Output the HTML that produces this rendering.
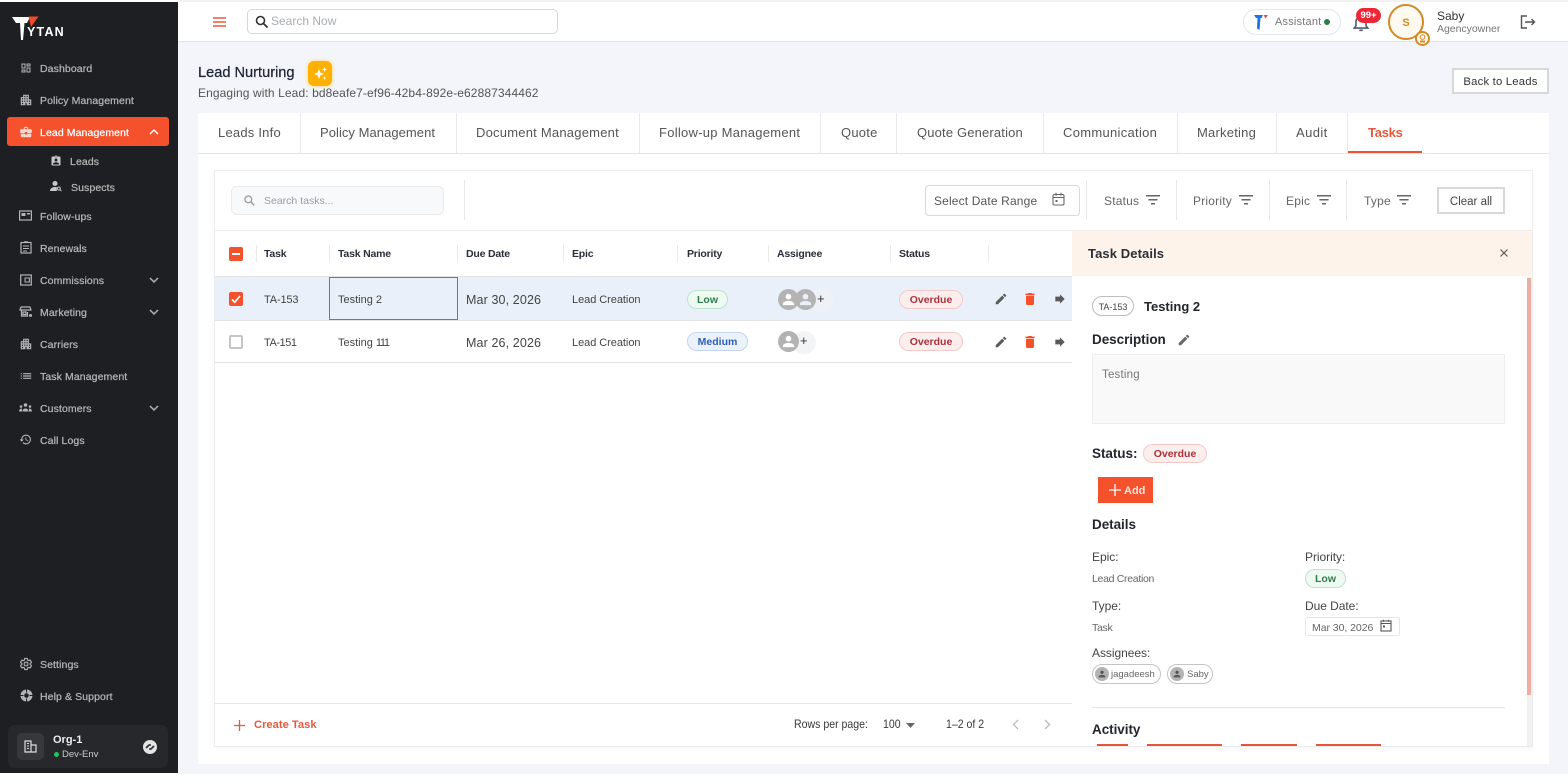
<!DOCTYPE html>
<html><head><meta charset="utf-8"><title>Tasks</title>
<style>
html,body{margin:0;padding:0;width:1568px;height:784px;overflow:hidden;background:#fff}
body{font-family:"Liberation Sans",sans-serif;position:relative;color:#333}
.b{position:absolute;box-sizing:border-box}
.t{position:absolute;white-space:nowrap;line-height:16px;transform:translateY(calc(-50% + 1px))}
.c{transform:translateY(calc(-50% + 1px)) scaleX(.88);transform-origin:left center}
.i{position:absolute;overflow:visible}
.s{font-size:10.5px;color:#b4b4b4;letter-spacing:.1px;font-weight:400;-webkit-text-stroke:.25px #b4b4b4}
.tab{font-size:13px;color:#555;letter-spacing:.22px}
.th{font-size:10.5px;font-weight:700;color:#2b2f38;letter-spacing:-.2px}
.td{font-size:11px;color:#444;letter-spacing:0}
.d{font-size:12.5px;letter-spacing:.12px}
.e{letter-spacing:-.05px}
.f{font-size:12px;color:#666;letter-spacing:.2px}
.pill{position:absolute;box-sizing:border-box;border-radius:10px;font-size:10.5px;font-weight:700;text-align:center;line-height:19px;height:19px;letter-spacing:0}
.low{background:#edf9f1;border:1px solid #bfe3cd;color:#2f7d50}
.med{background:#ebf2fc;border:1px solid #c4d6ef;color:#2f5fb5}
.over{background:#fdeeee;border:1px solid #f3c9c9;color:#a8323a}
.sep{position:absolute;width:1px;background:#e9e9e9}
.h{font-size:13.5px;font-weight:700;color:#23262e;letter-spacing:-.05px}
.l{font-size:12px;color:#444;letter-spacing:-.05px}
.sm{font-size:10.5px;color:#666;letter-spacing:-.3px}
</style></head>
<body>
<svg width="0" height="0" style="position:absolute"><defs>
<symbol id="edit" viewBox="0 0 24 24"><path d="M3 17.25V21h3.75L17.81 9.94l-3.75-3.75L3 17.25zM20.71 7.04c.39-.39.39-1.02 0-1.41l-2.34-2.34c-.39-.39-1.02-.39-1.41 0l-1.83 1.83 3.75 3.75 1.83-1.83z"/></symbol>
<symbol id="del" viewBox="0 0 24 24"><path d="M6 19c0 1.1.9 2 2 2h8c1.1 0 2-.9 2-2V7H6v12zM19 4h-3.5l-1-1h-5l-1 1H5v2h14V4z"/></symbol>
<symbol id="arr" viewBox="0 0 24 24"><path d="M12 8V4l8 8-8 8v-4H4V8z"/></symbol>
<symbol id="per" viewBox="0 0 24 24"><path d="M12 12c2.21 0 4-1.79 4-4s-1.79-4-4-4-4 1.79-4 4 1.79 4 4 4zm0 2c-2.67 0-8 1.34-8 4v2h16v-2c0-2.66-5.33-4-8-4z"/></symbol>
<symbol id="apt" viewBox="0 0 24 24"><path d="M17 11V3H7v4H3v14h8v-4h2v4h8V11h-4zM7 19H5v-2h2v2zm0-4H5v-2h2v2zm0-4H5V9h2v2zm4 4H9v-2h2v2zm0-4H9V9h2v2zm0-4H9V5h2v2zm4 8h-2v-2h2v2zm0-4h-2V9h2v2zm0-4h-2V5h2v2zm4 12h-2v-2h2v2zm0-4h-2v-2h2v2z"/></symbol>
<symbol id="flt" viewBox="0 0 14 10"><path d="M0 .75h14M2.5 4.75h9M5 8.75h4" fill="none" stroke="#666" stroke-width="1.4"/></symbol>
</defs></svg>

<!-- main background -->
<div class="b" style="left:178px;top:41px;width:1390px;height:733px;background:#f4f5fa"></div>

<!-- sidebar -->
<div class="b" style="left:0;top:2px;width:178px;height:771px;background:#1d1f22"></div>
<svg class="i" style="left:10px;top:14px" width="60" height="28" viewBox="0 0 60 28">
<path d="M2 3H20L17 9H14.500L13 26H11L10 9H6Z" fill="#fff"/>
<path d="M18.500 2.500H28.500L21 13Z" fill="#f0492c"/>
</svg>
<div class="t" style="left:27px;top:31px;font-size:12.5px;font-weight:700;color:#fff;letter-spacing:1.2px">YTAN</div>

<svg class="i" style="left:20px;top:62px" width="12" height="12" viewBox="0 0 24 24" fill="#b4b4b4"><path d="M19 5v2h-4V5h4M9 5v6H5V5h4m10 8v6h-4v-6h4M9 17v2H5v-2h4M21 3h-8v6h8V3zM11 3H3v10h8V3zm10 8h-8v10h8V11zm-10 4H3v6h8v-6z"/></svg>
<div class="t s" style="left:40px;top:68px">Dashboard</div>
<svg class="i" style="left:19px;top:93px" width="14" height="14" fill="#b4b4b4"><use href="#apt"/></svg>
<div class="t s" style="left:40px;top:100px">Policy Management</div>

<div class="b" style="left:7px;top:117px;width:162px;height:29px;background:#f4512c;border-radius:3px"></div>
<svg class="i" style="left:19px;top:125px" width="14" height="14" viewBox="0 0 24 24" fill="#f8d9cf"><path d="M10 16v-1H3.010L3 19c0 1.110.89 2 2 2h14c1.110 0 2-.89 2-2v-4h-7v1h-4zm10-9h-4.010V5l-2-2h-4l-2 2v2H4c-1.100 0-2 .9-2 2v3c0 1.110.89 2 2 2h6v-2h4v2h6c1.100 0 2-.9 2-2V9c0-1.100-.9-2-2-2zm-6 0h-4V5h4v2z"/></svg>
<div class="t s" style="left:40px;top:132px;color:#fff;-webkit-text-stroke:.25px #fff">Lead Management</div>
<svg class="i" style="left:149px;top:129px" width="10" height="6" viewBox="0 0 10 6"><path d="M1 5l4-4 4 4" fill="none" stroke="#fff" stroke-width="1.500"/></svg>

<svg class="i" style="left:50px;top:155px" width="12" height="12" viewBox="0 0 24 24" fill="#c8c8c8"><path d="M19 3h-4.180C14.400 1.840 13.300 1 12 1c-1.300 0-2.400.84-2.820 2H5c-1.100 0-2 .9-2 2v14c0 1.100.9 2 2 2h14c1.100 0 2-.9 2-2V5c0-1.100-.9-2-2-2zm-7 0c.55 0 1 .45 1 1s-.45 1-1 1-1-.45-1-1 .45-1 1-1zm0 4c1.660 0 3 1.340 3 3s-1.340 3-3 3-3-1.340-3-3 1.340-3 3-3zm6 12H6v-1.400c0-2 4-3.100 6-3.100s6 1.100 6 3.100V19z"/></svg>
<div class="t s" style="left:70px;top:161px">Leads</div>
<svg class="i" style="left:50px;top:180px" width="12" height="12" viewBox="0 0 12 12" fill="#c8c8c8"><circle cx="5" cy="3.500" r="2.500"/><path d="M0 11c0-3 3-4 5-4 .6 0 1.200.1 1.800.2V11z"/><circle cx="8.800" cy="8.500" r="1.500" fill="none" stroke="#c8c8c8"/><path d="M10 9.700l1.500 1.500" stroke="#c8c8c8"/></svg>
<div class="t s" style="left:71px;top:187px">Suspects</div>

<svg class="i" style="left:19px;top:210px" width="13" height="12" viewBox="0 0 13 12"><rect x=".6" y="1" width="11.800" height="9" fill="none" stroke="#b4b4b4" stroke-width="1.200"/><rect x="2.500" y="3" width="4" height="3" fill="#b4b4b4"/><rect x="8" y="3" width="3" height="1.500" fill="#b4b4b4"/></svg>
<div class="t s" style="left:40px;top:216px">Follow-ups</div>
<svg class="i" style="left:20px;top:241px" width="12" height="13" viewBox="0 0 12 13"><rect x="1" y="1.500" width="10" height="10.500" fill="none" stroke="#b4b4b4" stroke-width="1.200"/><path d="M3 5h6M3 7.500h6M3 10h4M4 .8h4" stroke="#b4b4b4" stroke-width="1.100"/></svg>
<div class="t s" style="left:40px;top:248px">Renewals</div>
<svg class="i" style="left:20px;top:274px" width="12" height="12" viewBox="0 0 12 12"><rect x=".7" y="1" width="10.600" height="10" fill="none" stroke="#b4b4b4" stroke-width="1.200"/><rect x="5" y="4" width="4.500" height="4" fill="none" stroke="#b4b4b4"/></svg>
<div class="t s" style="left:40px;top:280px">Commissions</div>
<svg class="i" style="left:149px;top:277px" width="10" height="6" viewBox="0 0 10 6"><path d="M1 1l4 4 4-4" fill="none" stroke="#b4b4b4" stroke-width="1.500"/></svg>
<svg class="i" style="left:20px;top:306px" width="13" height="12" viewBox="0 0 13 12"><path d="M1 1h9l1 3H0zM1.500 4v6h6V6M3 6h3v2.500H3z" fill="none" stroke="#b4b4b4" stroke-width="1.200"/><circle cx="10.500" cy="9.500" r="1.500" fill="#b4b4b4"/></svg>
<div class="t s" style="left:40px;top:312px">Marketing</div>
<svg class="i" style="left:149px;top:309px" width="10" height="6" viewBox="0 0 10 6"><path d="M1 1l4 4 4-4" fill="none" stroke="#b4b4b4" stroke-width="1.500"/></svg>
<svg class="i" style="left:19px;top:337px" width="14" height="14" fill="#b4b4b4"><use href="#apt"/></svg>
<div class="t s" style="left:40px;top:344px">Carriers</div>
<svg class="i" style="left:19px;top:369px" width="14" height="14" viewBox="0 0 24 24" fill="#b4b4b4"><path d="M3 13h2v-2H3v2zm0 4h2v-2H3v2zm0-8h2V7H3v2zm4 4h14v-2H7v2zm0 4h14v-2H7v2zM7 7v2h14V7H7z"/></svg>
<div class="t s" style="left:40px;top:376px">Task Management</div>
<svg class="i" style="left:19px;top:403px" width="13" height="9" viewBox="0 0 13 9" fill="#b4b4b4"><circle cx="6.500" cy="2" r="1.800"/><circle cx="2" cy="3.500" r="1.300"/><circle cx="11" cy="3.500" r="1.300"/><path d="M3.500 8.500c0-4 6-4 6 0zM0 8.500c0-2.500 2-3 3-3v3zM13 8.500c0-2.500-2-3-3-3v3z"/></svg>
<div class="t s" style="left:40px;top:408px">Customers</div>
<svg class="i" style="left:149px;top:405px" width="10" height="6" viewBox="0 0 10 6"><path d="M1 1l4 4 4-4" fill="none" stroke="#b4b4b4" stroke-width="1.500"/></svg>
<svg class="i" style="left:19px;top:433px" width="13" height="13" viewBox="0 0 24 24" fill="#b4b4b4"><path d="M13 3c-4.970 0-9 4.030-9 9H1l3.890 3.890.07.14L9 12H6c0-3.870 3.130-7 7-7s7 3.130 7 7-3.130 7-7 7c-1.930 0-3.680-.79-4.940-2.060l-1.420 1.420C8.270 19.990 10.510 21 13 21c4.970 0 9-4.030 9-9s-4.030-9-9-9zm-1 5v5l4.280 2.540.72-1.210-3.500-2.080V8H12z"/></svg>
<div class="t s" style="left:40px;top:440px">Call Logs</div>

<svg class="i" style="left:19px;top:657px" width="14" height="14" viewBox="0 0 24 24" fill="none" stroke="#b4b4b4" stroke-width="2"><path d="M19.140 12.940c.04-.3.06-.61.06-.94 0-.32-.02-.64-.07-.94l2.030-1.580c.18-.14.23-.41.12-.61l-1.920-3.320c-.12-.22-.37-.29-.59-.22l-2.390.96c-.5-.38-1.030-.7-1.620-.94l-.36-2.540c-.04-.24-.24-.41-.48-.41h-3.840c-.24 0-.43.17-.47.41l-.36 2.540c-.59.24-1.130.57-1.620.94l-2.390-.96c-.22-.08-.47 0-.59.22L2.740 8.870c-.12.21-.08.47.12.61l2.030 1.580c-.05.3-.09.63-.09.94s.02.64.07.94l-2.030 1.580c-.18.14-.23.41-.12.61l1.920 3.320c.12.22.37.29.59.22l2.390-.96c.5.38 1.030.7 1.620.94l.36 2.540c.05.24.24.41.48.41h3.840c.24 0 .44-.17.47-.41l.36-2.540c.59-.24 1.130-.56 1.620-.94l2.390.96c.22.08.47 0 .59-.22l1.920-3.320c.12-.22.07-.47-.12-.61l-2.010-1.580z"/><circle cx="12" cy="12" r="3.200"/></svg>
<div class="t s" style="left:40px;top:664px">Settings</div>
<svg class="i" style="left:20px;top:689px" width="13" height="13" viewBox="0 0 13 13"><circle cx="6.500" cy="6.500" r="6" fill="#b4b4b4"/><circle cx="6.500" cy="6.500" r="2.300" fill="#1d1f22"/><path d="M6.500 .5v3M6.500 9.500v3M.5 6.500h3M9.500 6.500h3" stroke="#1d1f22" stroke-width="1"/></svg>
<div class="t s" style="left:40px;top:696px">Help &amp; Support</div>

<div class="b" style="left:8px;top:725px;width:160px;height:43px;background:#26282b;border-radius:7px"></div>
<div class="b" style="left:17px;top:733px;width:27px;height:27px;background:#36383b;border-radius:5px"></div>
<svg class="i" style="left:24px;top:740px" width="13" height="13" viewBox="0 0 13 13"><path d="M1 1h6v11H1zM7 5h5v7H7z" fill="none" stroke="#ddd" stroke-width="1.200"/><path d="M3 3.500h2M3 6h2M3 8.500h2" stroke="#ddd"/></svg>
<div class="t" style="left:53px;top:739px;font-size:11px;font-weight:700;color:#eee">Org-1</div>
<div class="b" style="left:54px;top:752px;width:5px;height:5px;border-radius:50%;background:#22c55e"></div>
<div class="t" style="left:62px;top:754px;font-size:9.500px;color:#ccc">Dev-Env</div>
<div class="b" style="left:143px;top:740px;width:14px;height:14px;border-radius:50%;background:#e4e4e4"></div>
<svg class="i" style="left:145px;top:743px" width="10" height="8" viewBox="0 0 10 8"><path d="M1 5l3-3h2M9 3L6 6H4" fill="none" stroke="#2a2a2a" stroke-width="1.600"/></svg>

<!-- top bar -->
<div class="b" style="left:178px;top:2px;width:1390px;height:40px;background:#fff;border-bottom:1px solid #e3e3e3"></div>
<div class="b" style="left:178px;top:0;width:1390px;height:2px;background:#f2f2f2"></div>
<svg class="i" style="left:213px;top:17px" width="13" height="10" viewBox="0 0 13 10"><path d="M0 1h13M0 5h13M0 9h13" stroke="#e8593f" stroke-width="1.500"/></svg>
<div class="b" style="left:247px;top:9px;width:311px;height:25px;border:1px solid #d4d7da;border-radius:5px"></div>
<svg class="i" style="left:255px;top:15px" width="14" height="14" viewBox="0 0 14 14"><circle cx="5.500" cy="5.500" r="4" fill="none" stroke="#333" stroke-width="1.600"/><path d="M8.500 8.500l4 4" stroke="#333" stroke-width="1.800"/></svg>
<div class="t" style="left:271px;top:20px;font-size:12px;color:#a9adb2">Search Now</div>

<div class="b" style="left:1243px;top:9px;width:98px;height:26px;border:1px solid #e4e7ec;border-radius:13px"></div>
<svg class="i" style="left:1253px;top:13px" width="16" height="18" viewBox="0 0 16 18"><path d="M1 2h9l-1.500 3H7.500L6.500 17 4 15.500 4.500 5H3z" fill="#1a73e8"/><path d="M10.500 2H15l-2.500 3.500z" fill="#e8503a"/></svg>
<div class="t" style="left:1275px;top:21px;font-size:11px;color:#777;letter-spacing:.2px">Assistant</div>
<div class="b" style="left:1324px;top:19px;width:6px;height:6px;border-radius:50%;background:#2f7d45"></div>
<svg class="i" style="left:1352px;top:14px" width="18" height="18" viewBox="0 0 16 16"><path d="M2 12.500h12l-1.500-2V7c0-2.500-1.800-4.500-4.500-4.500S3.500 4.500 3.500 7v3.500zM6.500 14.500h3" fill="none" stroke="#50586a" stroke-width="1.400"/></svg>
<div class="b" style="left:1356px;top:8px;width:25px;height:15px;border-radius:8px;background:#ee2737;color:#fff;font-size:9.500px;font-weight:700;text-align:center;line-height:15px">99+</div>
<div class="b" style="left:1388px;top:4px;width:36px;height:36px;border-radius:50%;border:2px solid #d28a27;background:#fffaf0;color:#d98a1a;font-size:11px;font-weight:700;text-align:center;line-height:34px">S</div>
<div class="b" style="left:1415px;top:31px;width:15px;height:15px;border-radius:50%;border:2px solid #d28a27;background:#fff8ee"></div>
<svg class="i" style="left:1419px;top:34px" width="7" height="9" viewBox="0 0 7 9"><circle cx="3.500" cy="3" r="2.300" fill="none" stroke="#d28a27"/><path d="M1 6.500h5v2H1z" fill="#d28a27"/></svg>
<div class="t" style="left:1437px;top:15px;font-size:12px;color:#333">Saby</div>
<div class="t" style="left:1437px;top:28px;font-size:10.5px;color:#777;letter-spacing:-.03px">Agencyowner</div>
<svg class="i" style="left:1520px;top:15px" width="16" height="14" viewBox="0 0 16 14"><path d="M7 1H1.500v12H7M5 7h9.500M11.500 4l3 3-3 3" fill="none" stroke="#555" stroke-width="1.400"/></svg>

<!-- page heading -->
<div class="t" style="left:198px;top:72px;font-size:14.6px;color:#1d2433;-webkit-text-stroke:.25px #1d2433">Lead Nurturing</div>
<div class="b" style="left:308px;top:61px;width:24px;height:25px;border-radius:6px;background:#ffb000;box-shadow:0 0 4px #ffd76a"></div>
<svg class="i" style="left:313px;top:66px" width="15" height="15" viewBox="0 0 15 15" fill="#fff"><path d="M6 3l1.400 3.600L11 8 7.400 9.400 6 13 4.600 9.400 1 8l3.600-1.400zM11.500 1l.7 1.800L14 3.500l-1.800.7-.7 1.800-.7-1.800L9 3.500l1.800-.7zM11.500 10l.5 1.500 1.500.5-1.500.5-.5 1.500-.5-1.500-1.500-.5 1.500-.5z"/></svg>
<div class="t" style="left:198px;top:92px;font-size:12px;color:#555;letter-spacing:.1px">Engaging with Lead: bd8eafe7-ef96-42b4-892e-e62887344462</div>
<div class="b" style="left:1452px;top:68px;width:97px;height:26px;background:#fff;border:2px solid #d6d8db;font-size:11.3px;color:#333;text-align:center;line-height:25px;letter-spacing:.2px">Back to Leads</div>

<!-- content card -->
<div class="b" style="left:198px;top:113px;width:1351px;height:651px;background:#fff"></div>
<div class="b" style="left:198px;top:153px;width:1351px;height:1px;background:#e5e5e5"></div>
<div class="sep" style="left:300px;top:113px;height:40px"></div>
<div class="sep" style="left:456px;top:113px;height:40px"></div>
<div class="sep" style="left:639px;top:113px;height:40px"></div>
<div class="sep" style="left:820px;top:113px;height:40px"></div>
<div class="sep" style="left:896px;top:113px;height:40px"></div>
<div class="sep" style="left:1043px;top:113px;height:40px"></div>
<div class="sep" style="left:1177px;top:113px;height:40px"></div>
<div class="sep" style="left:1276px;top:113px;height:40px"></div>
<div class="sep" style="left:1347px;top:113px;height:40px"></div>
<div class="t tab" style="left:218px;top:132px">Leads Info</div>
<div class="t tab" style="left:320px;top:132px;letter-spacing:.05px">Policy Management</div>
<div class="t tab" style="left:476px;top:132px">Document Management</div>
<div class="t tab" style="left:659px;top:132px;letter-spacing:.27px">Follow-up Management</div>
<div class="t tab" style="left:841px;top:132px">Quote</div>
<div class="t tab" style="left:917px;top:132px;letter-spacing:.16px">Quote Generation</div>
<div class="t tab" style="left:1063px;top:132px;letter-spacing:.3px">Communication</div>
<div class="t tab" style="left:1197px;top:132px">Marketing</div>
<div class="t tab" style="left:1296px;top:132px;letter-spacing:.4px">Audit</div>
<div class="t tab" style="left:1368px;top:132px;color:#e8583c;font-weight:700;letter-spacing:-.25px">Tasks</div>
<div class="b" style="left:1348px;top:151px;width:74px;height:2px;background:#ee5330"></div>

<!-- inner card -->
<div class="b" style="left:214px;top:170px;width:1319px;height:577px;border:1px solid #ececec;box-shadow:0 2px 4px rgba(0,0,0,.04);background:#fff"></div>
<div class="b" style="left:215px;top:230px;width:1317px;height:1px;background:#ececec"></div>
<div class="b" style="left:231px;top:186px;width:213px;height:29px;background:#f8f9fa;border:1px solid #e9eaec;border-radius:6px"></div>
<svg class="i" style="left:244px;top:195px" width="11" height="11" viewBox="0 0 14 14"><circle cx="5.500" cy="5.500" r="4.300" fill="none" stroke="#999" stroke-width="1.600"/><path d="M8.500 8.500l4.500 4.500" stroke="#999" stroke-width="1.800"/></svg>
<div class="t" style="left:264px;top:200px;font-size:10.5px;color:#9a9ea4;letter-spacing:0">Search tasks...</div>
<div class="sep" style="left:464px;top:180px;height:40px"></div>
<div class="b" style="left:925px;top:185px;width:155px;height:31px;border:1px solid #d9d9d9;border-radius:4px"></div>
<div class="t f" style="left:934px;top:200px;color:#555;letter-spacing:.15px">Select Date Range</div>
<svg class="i" style="left:1052px;top:192px" width="13" height="14" viewBox="0 0 13 14"><rect x="1" y="2.500" width="11" height="10.500" rx="1.500" fill="none" stroke="#666" stroke-width="1.100"/><path d="M1 5.500h11M4 .8v3M9 .8v3" stroke="#666" stroke-width="1.100"/><rect x="3.500" y="8" width="2" height="2" fill="#666"/></svg>
<div class="sep" style="left:1086px;top:180px;height:40px"></div>
<div class="sep" style="left:1176px;top:180px;height:40px"></div>
<div class="sep" style="left:1269px;top:180px;height:40px"></div>
<div class="sep" style="left:1346px;top:180px;height:40px"></div>
<div class="t f" style="left:1104px;top:200px">Status</div>
<svg class="i" style="left:1146px;top:195px" width="14" height="10"><use href="#flt"/></svg>
<div class="t f" style="left:1193px;top:200px">Priority</div>
<svg class="i" style="left:1239px;top:195px" width="14" height="10"><use href="#flt"/></svg>
<div class="t f" style="left:1286px;top:200px">Epic</div>
<svg class="i" style="left:1317px;top:195px" width="14" height="10"><use href="#flt"/></svg>
<div class="t f" style="left:1364px;top:200px">Type</div>
<svg class="i" style="left:1397px;top:195px" width="14" height="10"><use href="#flt"/></svg>
<div class="b" style="left:1437px;top:187px;width:68px;height:27px;border:2px solid #d6d8db;font-size:11.5px;color:#444;text-align:center;line-height:26px">Clear all</div>

<!-- table -->
<div class="b" style="left:215px;top:276px;width:857px;height:1px;background:#e4e4e4"></div>
<div class="b" style="left:215px;top:277px;width:857px;height:43px;background:#e9f0fa"></div>
<div class="b" style="left:215px;top:320px;width:857px;height:1px;background:#e4e4e4"></div>
<div class="b" style="left:215px;top:362px;width:857px;height:1px;background:#e4e4e4"></div>
<div class="b" style="left:215px;top:703px;width:857px;height:1px;background:#e8e8e8"></div>

<div class="sep" style="left:256px;top:245px;height:17px"></div>
<div class="sep" style="left:329px;top:245px;height:17px"></div>
<div class="sep" style="left:457px;top:245px;height:17px"></div>
<div class="sep" style="left:563px;top:245px;height:17px"></div>
<div class="sep" style="left:677px;top:245px;height:17px"></div>
<div class="sep" style="left:768px;top:245px;height:17px"></div>
<div class="sep" style="left:890px;top:245px;height:17px"></div>
<div class="sep" style="left:988px;top:245px;height:17px"></div>

<div class="b" style="left:229px;top:247px;width:14px;height:14px;background:#f4512c;border-radius:2px"></div>
<div class="b" style="left:232px;top:253px;width:8px;height:2px;background:#fff"></div>
<div class="t th" style="left:264px;top:253px">Task</div>
<div class="t th" style="left:338px;top:253px">Task Name</div>
<div class="t th" style="left:466px;top:253px">Due Date</div>
<div class="t th" style="left:572px;top:253px">Epic</div>
<div class="t th" style="left:687px;top:253px">Priority</div>
<div class="t th" style="left:777px;top:253px">Assignee</div>
<div class="t th" style="left:899px;top:253px">Status</div>

<!-- row 1 -->
<div class="b" style="left:229px;top:292px;width:14px;height:14px;background:#f4512c;border-radius:2px"></div>
<svg class="i" style="left:229px;top:292px" width="14" height="14" viewBox="0 0 14 14"><path d="M3 7.500l2.800 2.700L11 4" fill="none" stroke="#fff" stroke-width="1.600"/></svg>
<div class="t td" style="left:264px;top:299px;letter-spacing:-.15px">TA-153</div>
<div class="b" style="left:329px;top:277px;width:129px;height:43px;border:1px solid #4a86b5"></div>
<div class="t td" style="left:338px;top:299px">Testing 2</div>
<div class="t td d" style="left:466px;top:299px">Mar 30, 2026</div>
<div class="t td e" style="left:572px;top:299px">Lead Creation</div>
<div class="pill low" style="left:687px;top:290px;width:41px">Low</div>
<div class="b" style="left:809px;top:288px;width:24px;height:24px;border-radius:50%;background:#eef2f8"></div>
<div class="b" style="left:778px;top:289px;width:21px;height:21px;border-radius:50%;background:#b3b3b3"></div>
<svg class="i" style="left:780px;top:291px" width="17" height="17" fill="#fff"><use href="#per"/></svg>
<div class="b" style="left:795px;top:289px;width:21px;height:21px;border-radius:50%;background:#b3b3b3"></div>
<svg class="i" style="left:797px;top:291px" width="17" height="17" fill="#e9f0fa"><use href="#per"/></svg>
<div class="t" style="left:817px;top:298px;font-size:13px;color:#333">+</div>
<div class="pill over" style="left:899px;top:290px;width:64px">Overdue</div>
<svg class="i" style="left:994px;top:292px" width="14" height="14" fill="#5a5a5a"><use href="#edit"/></svg>
<svg class="i" style="left:1022px;top:291px" width="16" height="16" fill="#f4512c"><use href="#del"/></svg>
<svg class="i" style="left:1053px;top:292px" width="14" height="14" fill="#5a5a5a"><use href="#arr"/></svg>

<!-- row 2 -->
<div class="b" style="left:229px;top:335px;width:14px;height:14px;border:2px solid #c4c4c4;border-radius:2px"></div>
<div class="t td" style="left:264px;top:342px;letter-spacing:-.45px">TA-151</div>
<div class="t td" style="left:338px;top:342px">Testing <span style="letter-spacing:-1.3px">111</span></div>
<div class="t td d" style="left:466px;top:342px">Mar 26, 2026</div>
<div class="t td e" style="left:572px;top:342px">Lead Creation</div>
<div class="pill med" style="left:687px;top:332px;width:61px">Medium</div>
<div class="b" style="left:792px;top:331px;width:24px;height:23px;border-radius:50%;background:#f3f4f6"></div>
<div class="b" style="left:778px;top:331px;width:21px;height:21px;border-radius:50%;background:#b3b3b3"></div>
<svg class="i" style="left:780px;top:333px" width="17" height="17" fill="#fff"><use href="#per"/></svg>
<div class="t" style="left:800px;top:340px;font-size:13px;color:#333">+</div>
<div class="pill over" style="left:899px;top:332px;width:64px">Overdue</div>
<svg class="i" style="left:994px;top:335px" width="14" height="14" fill="#5a5a5a"><use href="#edit"/></svg>
<svg class="i" style="left:1022px;top:334px" width="16" height="16" fill="#f4512c"><use href="#del"/></svg>
<svg class="i" style="left:1053px;top:335px" width="14" height="14" fill="#5a5a5a"><use href="#arr"/></svg>

<!-- footer -->
<svg class="i" style="left:234px;top:720px" width="11" height="11" viewBox="0 0 11 11"><path d="M5.500 0v11M0 5.500h11" stroke="#e5593f" stroke-width="1.300"/></svg>
<div class="t" style="left:254px;top:724px;font-size:11.2px;font-weight:700;color:#e5593f">Create Task</div>
<div class="t c" style="left:794px;top:723px;font-size:12px;color:#3a3a3a">Rows per page:</div>
<div class="t c" style="left:883px;top:723px;font-size:12px;color:#3a3a3a">100</div>
<svg class="i" style="left:906px;top:723px" width="9" height="5" viewBox="0 0 9 5"><path d="M0 0h9L4.500 5z" fill="#666"/></svg>
<div class="t c" style="left:946px;top:723px;font-size:12px;color:#3a3a3a">1–2 of 2</div>
<svg class="i" style="left:1012px;top:719px" width="7" height="11" viewBox="0 0 7 11"><path d="M6 1L1.500 5.500 6 10" fill="none" stroke="#bbb" stroke-width="1.300"/></svg>
<svg class="i" style="left:1044px;top:719px" width="7" height="11" viewBox="0 0 7 11"><path d="M1 1l4.500 4.500L1 10" fill="none" stroke="#bbb" stroke-width="1.300"/></svg>

<!-- detail panel -->
<div class="b" style="left:1072px;top:231px;width:460px;height:45px;background:#fdf3ea"></div>
<div class="t" style="left:1088px;top:253px;font-size:13px;font-weight:700;color:#2b2f38;letter-spacing:.1px">Task Details</div>
<svg class="i" style="left:1500px;top:249px" width="8" height="8" viewBox="0 0 8 8"><path d="M.5.500l7 7M7.500.500l-7 7" stroke="#555" stroke-width="1.100"/></svg>
<div class="b" style="left:1527px;top:277px;width:5px;height:469px;background:#f1f1f1"></div>
<div class="b" style="left:1527px;top:278px;width:3.5px;height:417px;background:#ecaea4"></div>

<div class="b" style="left:1092px;top:296px;width:42px;height:20px;border:1px solid #bdbdbd;border-radius:10px;font-size:9px;color:#444;text-align:center;line-height:20px">TA-153</div>
<div class="t" style="left:1144px;top:306px;font-size:13px;font-weight:700;color:#23262e">Testing 2</div>
<div class="t h" style="left:1092px;top:339px">Description</div>
<svg class="i" style="left:1177px;top:333px" width="14" height="14" fill="#666"><use href="#edit"/></svg>
<div class="b" style="left:1092px;top:354px;width:413px;height:70px;background:#f9f9f9;border:1px solid #eeeeee"></div>
<div class="t" style="left:1102px;top:374px;font-size:11.5px;color:#777;letter-spacing:.2px">Testing</div>
<div class="t h" style="left:1092px;top:453px">Status:</div>
<div class="pill over" style="left:1143px;top:444px;width:64px">Overdue</div>
<div class="b" style="left:1098px;top:477px;width:55px;height:26px;background:#f4512c"></div>
<svg class="i" style="left:1109px;top:484px" width="12" height="12" viewBox="0 0 12 12"><path d="M6 0v12M0 6h12" stroke="#fff" stroke-width="1.300"/></svg>
<div class="t" style="left:1124px;top:490px;font-size:11px;font-weight:700;color:#fde5de">Add</div>
<div class="t h" style="left:1092px;top:524px">Details</div>
<div class="t l" style="left:1092px;top:556px">Epic:</div>
<div class="t sm" style="left:1092px;top:578px">Lead Creation</div>
<div class="t l" style="left:1305px;top:556px">Priority:</div>
<div class="pill low" style="left:1305px;top:569px;width:41px">Low</div>
<div class="t l" style="left:1092px;top:605px">Type:</div>
<div class="t sm" style="left:1092px;top:627px">Task</div>
<div class="t l" style="left:1305px;top:605px">Due Date:</div>
<div class="b" style="left:1305px;top:617px;width:95px;height:19px;border:1px solid #e6e6e6;border-radius:2px"></div>
<div class="t sm" style="left:1312px;top:627px;letter-spacing:-.05px">Mar 30, 2026</div>
<svg class="i" style="left:1380px;top:619px" width="12" height="13" viewBox="0 0 12 13"><rect x="1" y="2" width="10" height="10" fill="none" stroke="#555" stroke-width="1.100"/><path d="M1 4.500h10M3.500.8v2M8.500.8v2" stroke="#555"/><rect x="3" y="6.500" width="2" height="2" fill="#555"/></svg>
<div class="t l" style="left:1092px;top:652px">Assignees:</div>
<div class="b" style="left:1092px;top:664px;width:69px;height:20px;border:1px solid #c4c4c4;border-radius:10px"></div>
<div class="b" style="left:1095px;top:667px;width:14px;height:14px;border-radius:50%;background:#b3b3b3"></div>
<svg class="i" style="left:1097px;top:669px" width="10" height="10" fill="#555"><use href="#per"/></svg>
<div class="t sm" style="left:1111px;top:674px;font-size:9.5px;letter-spacing:0">jagadeesh</div>
<div class="b" style="left:1167px;top:664px;width:46px;height:20px;border:1px solid #c4c4c4;border-radius:10px"></div>
<div class="b" style="left:1170px;top:667px;width:14px;height:14px;border-radius:50%;background:#b3b3b3"></div>
<svg class="i" style="left:1172px;top:669px" width="10" height="10" fill="#555"><use href="#per"/></svg>
<div class="t sm" style="left:1187px;top:674px;font-size:9.5px;letter-spacing:0">Saby</div>
<div class="b" style="left:1092px;top:707px;width:413px;height:1px;background:#e5e5e5"></div>
<div class="t h" style="left:1092px;top:729px">Activity</div>
<div class="b" style="left:1097px;top:744px;width:31px;height:2px;background:#e8543a"></div>
<div class="b" style="left:1147px;top:744px;width:75px;height:2px;background:#e8543a"></div>
<div class="b" style="left:1241px;top:744px;width:56px;height:2px;background:#e8543a"></div>
<div class="b" style="left:1316px;top:744px;width:65px;height:2px;background:#e8543a"></div>
</body></html>
